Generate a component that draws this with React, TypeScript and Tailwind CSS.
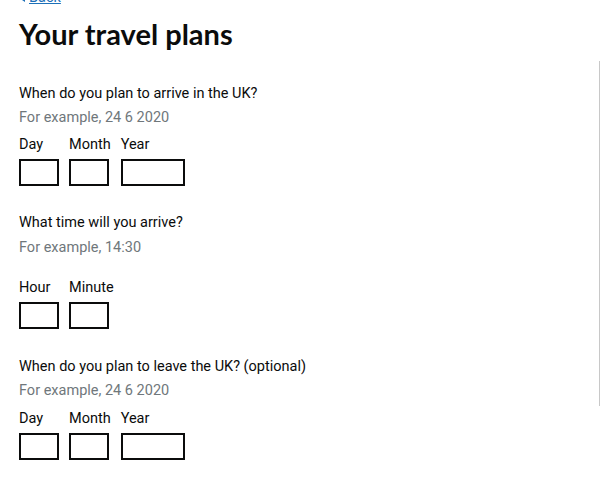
import React from "react";

type Field = { label: string; width: string };

const dateFields: Field[] = [
  { label: "Day", width: "w-[40px]" },
  { label: "Month", width: "w-[40px]" },
  { label: "Year", width: "w-[64px]" },
];

const timeFields: Field[] = [
  { label: "Hour", width: "w-[40px]" },
  { label: "Minute", width: "w-[40px]" },
];

const Question: React.FC<{
  question: string;
  hint: string;
  fields: Field[];
  labelGap: string;
  hintGap: string;
}> = ({ question, hint, fields, labelGap, hintGap }) => (
  <fieldset>
    <legend className="text-[14.5px] leading-5 text-[#0b0c0c]">{question}</legend>
    <div className={`${hintGap} text-[14.5px] leading-5 text-[#6f777b]`}>{hint}</div>
    <div className={`${labelGap} flex gap-[10px]`}>
      {fields.map((f) => (
        <div key={f.label} className="flex flex-col">
          <label className="text-[14.5px] leading-5 text-[#0b0c0c]">{f.label}</label>
          <input
            type="text"
            className={`${f.width} mt-1 h-[27px] border-2 border-[#0b0c0c] bg-white outline-none`}
          />
        </div>
      ))}
    </div>
  </fieldset>
);

const App: React.FC = () => {
  return (
    <div
      className="relative min-h-[500px] bg-white px-[19px] text-[#0b0c0c]"
      style={{ fontFamily: 'Roboto, "Noto Sans", Arial, sans-serif' }}
    >
      <a
        href="#"
        className="-mt-[12px] flex items-center gap-1 text-[14.5px] leading-5 text-[#1d70b8] underline"
      >
        <span className="inline-block h-0 w-0 border-y-[4px] border-r-[6px] border-y-transparent border-r-[#1d70b8]" />
        Back
      </a>
      <h1
        className="mt-[10px] text-[29px] font-bold leading-8"
        style={{ fontFamily: 'Lato, Roboto, sans-serif' }}
      >
        Your travel plans
      </h1>

      <div className="mt-[34px] flex flex-col">
        <Question
          question="When do you plan to arrive in the UK?"
          hint="For example, 24 6 2020"
          fields={dateFields}
          hintGap="mt-1"
          labelGap="mt-[7px]"
        />
        <div className="mt-[27px]">
          <Question
            question="What time will you arrive?"
            hint="For example, 14:30"
            fields={timeFields}
            hintGap="mt-[5px]"
            labelGap="mt-5"
          />
        </div>
        <div className="mt-[28px]">
          <Question
            question="When do you plan to leave the UK? (optional)"
            hint="For example, 24 6 2020"
            fields={dateFields}
            hintGap="mt-1"
            labelGap="mt-2"
          />
        </div>
      </div>

      {/* scrollbar thumb */}
      <div className="absolute right-0 top-[73px] h-[345px] w-px bg-[#c8c8c8]" />
    </div>
  );
};

export default App;
